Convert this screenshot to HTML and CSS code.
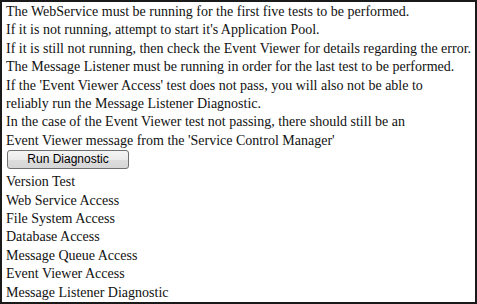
FILE: index.html
```html
<!DOCTYPE html>
<html>
<head>
<meta charset="utf-8">
<link rel="stylesheet" href="styles.css">
</head>
<body>
<div class="frame">
  <div class="notes">
    The WebService must be running for the first five tests to be performed.<br>
    If it is not running, attempt to start it's Application Pool.<br>
    If it is still not running, then check the Event Viewer for details regarding the error.<br>
    The Message Listener must be running in order for the last test to be performed.<br>
    If the 'Event Viewer Access' test does not pass, you will also not be able to<br>
    reliably run the Message Listener Diagnostic.<br>
    In the case of the Event Viewer test not passing, there should still be an<br>
    Event Viewer message from the 'Service Control Manager'
  </div>
  <button class="run" type="button">Run Diagnostic</button>
  <div class="tests">
    <div class="test">Version Test</div>
    <div class="test">Web Service Access</div>
    <div class="test">File System Access</div>
    <div class="test">Database Access</div>
    <div class="test">Message Queue Access</div>
    <div class="test">Event Viewer Access</div>
    <div class="test">Message Listener Diagnostic</div>
  </div>
</div>
</body>
</html>
```
FILE: styles.css
```css
html, body {
  margin: 0;
  padding: 0;
  background: #fff;
}
.frame {
  box-sizing: border-box;
  width: 477px;
  height: 304px;
  border: 2px solid #1a1a1a;
  padding: 1px 4px;
  font-family: "Liberation Serif", "Times New Roman", serif;
  font-size: 14px;
  line-height: 18.4px;
  color: #111;
  overflow: hidden;
  display: flex;
  flex-direction: column;
  align-items: flex-start;
}
.notes {
  white-space: nowrap;
}
.run {
  margin: 0 0 4px 1px;
  width: 122px;
  height: 19px;
  padding: 0;
  border: 1px solid #707070;
  border-radius: 3px;
  background: linear-gradient(#f4f4f4, #ebebeb 50%, #dddddd 51%, #d6d6d6);
  font-family: "Liberation Sans", Arial, sans-serif;
  font-size: 12px;
  line-height: 17px;
  color: #000;
}
.tests {
  display: flex;
  flex-direction: column;
}
```
